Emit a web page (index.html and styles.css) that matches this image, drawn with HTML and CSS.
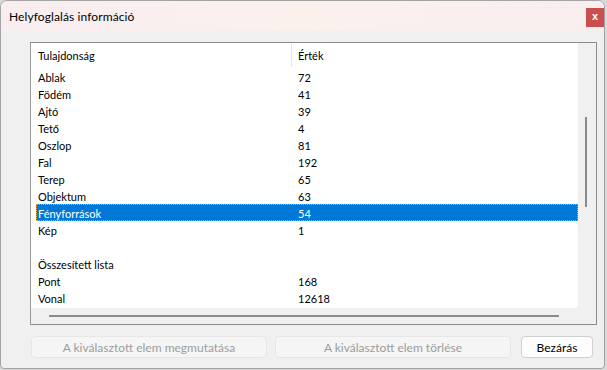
FILE: index.html
```html
<!DOCTYPE html>
<html lang="hu">
<head>
<meta charset="utf-8">
<title>Helyfoglalás információ</title>
<link rel="stylesheet" href="styles.css">
</head>
<body>
<div class="window">
  <div class="titlebar">
    <span class="title">Helyfoglalás információ</span>
    <span class="close">x</span>
  </div>
  <div class="content">
    <div class="listbox">
      <div class="listmain">
        <div class="listarea">
          <div class="header">
            <div class="hcol hcol1">Tulajdonság</div>
            <div class="hcol hcol2">Érték</div>
          </div>
          <div class="row"><span class="c1">Ablak</span><span class="c2">72</span></div>
          <div class="row"><span class="c1">Födém</span><span class="c2">41</span></div>
          <div class="row"><span class="c1">Ajtó</span><span class="c2">39</span></div>
          <div class="row"><span class="c1">Tető</span><span class="c2">4</span></div>
          <div class="row"><span class="c1">Oszlop</span><span class="c2">81</span></div>
          <div class="row"><span class="c1">Fal</span><span class="c2">192</span></div>
          <div class="row"><span class="c1">Terep</span><span class="c2">65</span></div>
          <div class="row"><span class="c1">Objektum</span><span class="c2">63</span></div>
          <div class="row selected"><span class="c1">Fényforrások</span><span class="c2">54</span></div>
          <div class="row"><span class="c1">Kép</span><span class="c2">1</span></div>
          <div class="row"><span class="c1"></span><span class="c2"></span></div>
          <div class="row"><span class="c1">Összesített lista</span><span class="c2"></span></div>
          <div class="row"><span class="c1">Pont</span><span class="c2">168</span></div>
          <div class="row"><span class="c1">Vonal</span><span class="c2">12618</span></div>
        </div>
        <div class="hscroll"><div class="hthumb"></div></div>
      </div>
      <div class="vscroll"><div class="vthumb"></div></div>
    </div>
    <div class="buttons">
      <button class="btn btn-wide" disabled>A kiválasztott elem megmutatása</button>
      <button class="btn btn-wide" disabled>A kiválasztott elem törlése</button>
      <button class="btn btn-close">Bezárás</button>
    </div>
  </div>
</div>
</body>
</html>
```

FILE: styles.css
```css
* { box-sizing: border-box; }

html, body {
  margin: 0;
  padding: 0;
}

body {
  background: #d9d9d9;
  width: 607px;
  height: 370px;
  overflow: hidden;
  font-family: Lato, "Liberation Sans", sans-serif;
  font-size: 12px;
  color: #000;
}

.window {
  width: 605px;
  height: 369px;
  border: 1px solid #a4a4a4;
  border-radius: 7px 7px 4px 4px;
  background: #f0f0f0;
  display: flex;
  flex-direction: column;
  overflow: hidden;
}

.titlebar {
  height: 30px;
  flex: none;
  display: flex;
  align-items: flex-start;
  background: linear-gradient(90deg, #f8eef0 0%, #faf0ec 50%, #f8eeef 100%);
}

.title {
  margin-left: 8px;
  margin-top: 9px;
  line-height: 14px;
  font-size: 12px;
  letter-spacing: 0.1px;
}

.close {
  margin-left: auto;
  margin-top: 7px;
  width: 18px;
  height: 19px;
  background: #c94f4f;
  color: #fff;
  font-size: 11px;
  font-weight: bold;
  line-height: 17px;
  text-align: center;
  font-family: "Liberation Sans", sans-serif;
}

.content {
  flex: 1;
  padding: 11px 0 0 29px;
  display: flex;
  flex-direction: column;
}

.listbox {
  width: 567px;
  height: 283px;
  border: 1px solid #8b8b8b;
  border-left-color: #9a9a9a;
  background: #f0f0f0;
  display: flex;
  font-size: 11px;
}

.listmain {
  width: 547px;
  display: flex;
  flex-direction: column;
}

.listarea {
  height: 265px;
  background: #fff;
  border-bottom-right-radius: 4px;
  overflow: hidden;
}

.header {
  height: 25px;
  display: flex;
  align-items: stretch;
}

.hcol {
  display: flex;
  align-items: center;
  padding-bottom: 1px;
}

.hcol1 {
  width: 261px;
  padding-left: 7px;
  border-right: 1px solid #e5e5e5;
  margin-top: 1px;
  margin-bottom: 1px;
}

.hcol2 {
  padding-left: 6px;
}

.row {
  height: 17px;
  margin-left: 5px;
  display: flex;
  align-items: center;
  line-height: 17px;
  padding-top: 1px;
}

.c1 {
  width: 256px;
  padding-left: 2px;
}

.c2 {
  padding-left: 6px;
}

.row.selected {
  background: #0078d7;
  color: #fff;
  outline: 1px dotted #e9a540;
  outline-offset: -1px;
}

.hscroll {
  height: 16px;
  padding-top: 7px;
  padding-left: 18px;
}

.hthumb {
  width: 510px;
  height: 2px;
  background: #8a8a8a;
}

.vscroll {
  width: 18px;
  padding-top: 74px;
  padding-left: 7px;
}

.vthumb {
  width: 2px;
  height: 90px;
  background: #8a8a8a;
}

.buttons {
  display: flex;
  margin-top: 11px;
  margin-left: 1px;
  gap: 8px;
}

.btn {
  height: 22px;
  border-radius: 4px;
  font-family: Lato, "Liberation Sans", sans-serif;
  font-size: 12px;
  padding: 0;
  margin: 0;
}

.btn-wide {
  width: 236px;
  background: #f5f5f5;
  border: 1px solid #e6e6e6;
  color: #9d9d9d;
}

.btn-close {
  width: 72px;
  margin-left: 2px;
  background: #fdfdfd;
  border: 1px solid #d0d0d0;
  color: #000;
}
```
